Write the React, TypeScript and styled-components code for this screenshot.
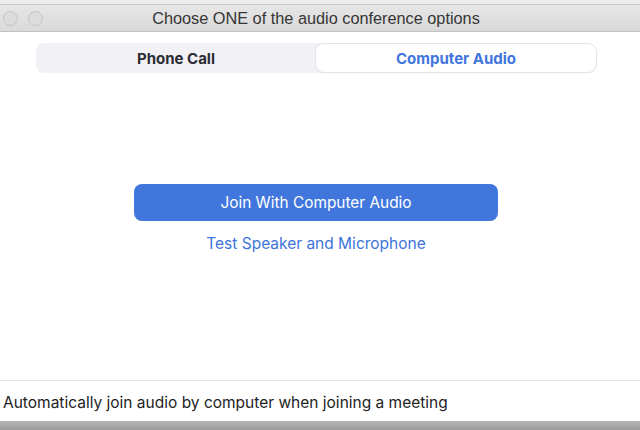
import React from "react";
import styled, { createGlobalStyle } from "styled-components";

const GlobalStyle = createGlobalStyle`
  html, body {
    margin: 0;
    padding: 0;
    background: #ffffff;
  }
  body {
    font-family: Inter, "Liberation Sans", Arial, sans-serif;
  }
`;

const Window = styled.div`
  width: 640px;
  height: 430px;
  display: flex;
  flex-direction: column;
  overflow: hidden;
  background: #ffffff;
`;

const TopEdge = styled.div`
  height: 4px;
  background: #ececec;
  border-bottom: 1px solid #c9c9c9;
`;

const TitleBar = styled.div`
  position: relative;
  height: 26px;
  display: flex;
  align-items: center;
  justify-content: center;
  padding-right: 8px;
  background: linear-gradient(#e6e6e6, #d9d9d9);
  border-bottom: 1px solid #c2c2c2;
`;

const Lights = styled.div`
  position: absolute;
  left: 3px;
  top: 6px;
  display: flex;
  gap: 10px;
`;

const Light = styled.span`
  width: 13px;
  height: 13px;
  border-radius: 50%;
  border: 1px solid #c4c4c4;
  background: #dcdcdc;
`;

const Title = styled.div`
  font-family: "Liberation Sans", Arial, sans-serif;
  font-size: 16.3px;
  color: #363636;
`;

const Body = styled.div`
  flex: 1;
  display: flex;
  flex-direction: column;
  align-items: center;
  padding-top: 11px;
  padding-right: 8px;
`;

const Segmented = styled.div`
  width: 560px;
  height: 30px;
  box-sizing: border-box;
  display: flex;
  padding: 1px 0;
  border-radius: 8px;
  background: #f1f1f6;
`;

const Segment = styled.div<{ $active?: boolean }>`
  flex: 1;
  display: flex;
  align-items: center;
  justify-content: center;
  border-radius: 8px;
  font-family: Inter, "Liberation Sans", Arial, sans-serif;
  font-weight: 700;
  font-size: 15px;
  color: ${(p) => (p.$active ? "#3f75dc" : "#2c2c33")};
  background: ${(p) => (p.$active ? "#ffffff" : "transparent")};
  box-shadow: ${(p) =>
    p.$active ? "0 0 0 1px #e4e4ea, 0 1px 2px rgba(0,0,0,0.08)" : "none"};
`;

const Actions = styled.div`
  margin-top: 111px;
  display: flex;
  flex-direction: column;
  align-items: center;
  gap: 12px;
`;

const JoinButton = styled.button`
  width: 364px;
  height: 37px;
  border: none;
  border-radius: 8px;
  background: #4177dd;
  color: #ffffff;
  font-family: Inter, "Liberation Sans", Arial, sans-serif;
  font-size: 15.4px;
  cursor: pointer;
`;

const TestLink = styled.a`
  margin-top: 1px;
  font-family: Inter, "Liberation Sans", Arial, sans-serif;
  font-size: 15.5px;
  color: #3d74da;
  text-decoration: none;
  cursor: pointer;
`;

const Footer = styled.div`
  height: 41px;
  box-sizing: border-box;
  border-top: 1px solid #e6e6e6;
  display: flex;
  align-items: center;
  padding: 2px 0 0 3px;
  font-family: Inter, "Liberation Sans", Arial, sans-serif;
  font-size: 15.5px;
  color: #232323;
`;

const BottomEdge = styled.div`
  height: 9px;
  background: linear-gradient(#b4b4b4, #9c9c9c);
`;

export default function App() {
  return (
    <>
      <GlobalStyle />
      <Window>
        <TopEdge />
        <TitleBar>
          <Lights>
            <Light />
            <Light />
          </Lights>
          <Title>Choose ONE of the audio conference options</Title>
        </TitleBar>
        <Body>
          <Segmented>
            <Segment>Phone Call</Segment>
            <Segment $active>Computer Audio</Segment>
          </Segmented>
          <Actions>
            <JoinButton>Join With Computer Audio</JoinButton>
            <TestLink>Test Speaker and Microphone</TestLink>
          </Actions>
        </Body>
        <Footer>Automatically join audio by computer when joining a meeting</Footer>
        <BottomEdge />
      </Window>
    </>
  );
}
